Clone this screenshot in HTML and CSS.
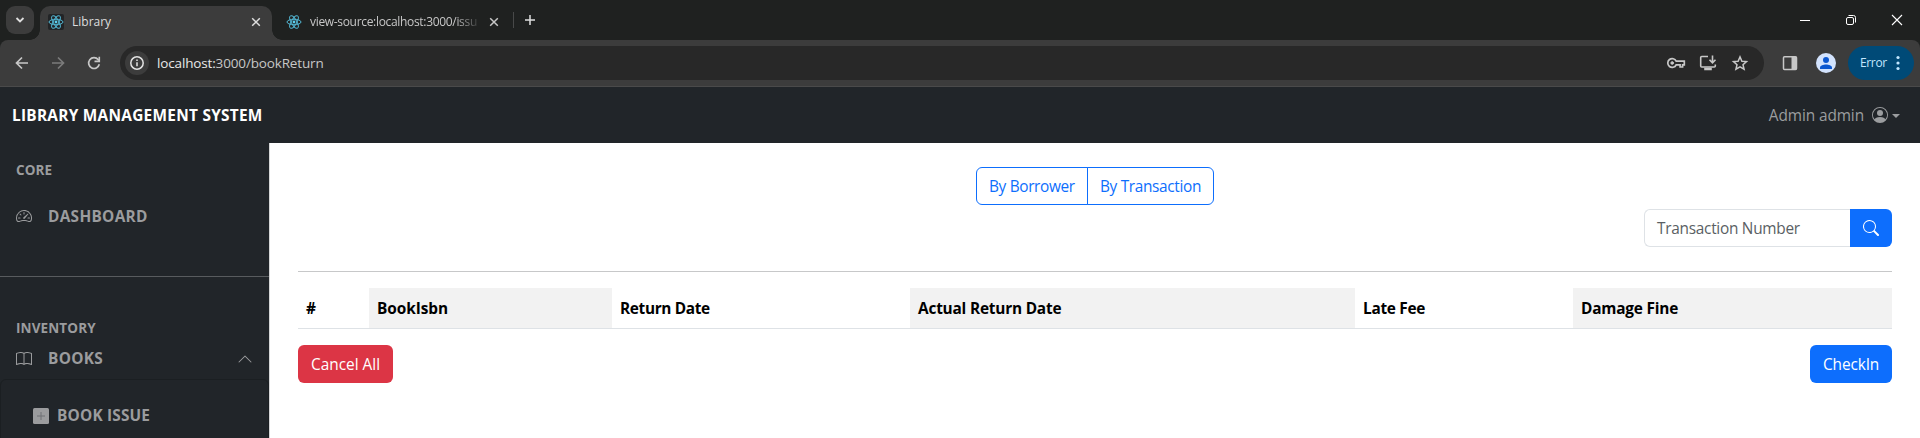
FILE: index.html
```html
<!DOCTYPE html>
<html lang="en">
<head>
<meta charset="utf-8">
<title>Library</title>
<link rel="stylesheet" href="styles.css">
</head>
<body>
<svg class="defs" aria-hidden="true">
  <symbol id="react" viewBox="-12 -12 24 24">
    <g fill="none" stroke="#52b5d1" stroke-width="1.5">
      <ellipse rx="10.5" ry="4.1"/><ellipse rx="10.5" ry="4.1" transform="rotate(60)"/><ellipse rx="10.5" ry="4.1" transform="rotate(120)"/>
    </g>
    <circle r="2.1" fill="#5ccfee"/>
  </symbol>
  <symbol id="x" viewBox="0 0 16 16"><path d="M4.2 4.2l7.6 7.6M11.8 4.2l-7.6 7.6" stroke="currentColor" stroke-width="1.5"/></symbol>
</svg>

<header class="browser">
  <div class="tabstrip">
    <div class="tab-search"><svg width="12" height="12" viewBox="0 0 12 12"><path d="M2.5 4l3.5 3.5L9.500 4" fill="none" stroke="currentColor" stroke-width="1.8"/></svg></div>
    <div class="tab tab-active">
      <span class="favicon favicon-dark"><svg width="16" height="16"><use href="#react"/></svg></span>
      <span class="tab-title t-library">Library</span>
      <svg class="tab-close" width="16" height="16"><use href="#x"/></svg>
    </div>
    <div class="tab tab-idle">
      <span class="favicon"><svg width="16" height="16"><use href="#react"/></svg></span>
      <span class="tab-title tab-fade t-source">view-source:localhost:3000/issu</span>
      <svg class="tab-close" width="16" height="16"><use href="#x"/></svg>
    </div>
    <div class="tab-sep"></div>
    <svg class="tab-new" width="16" height="16" viewBox="0 0 16 16"><path d="M8 3v10M3 8h10" stroke="currentColor" stroke-width="1.5"/></svg>
    <div class="window-controls">
      <svg width="12" height="12" viewBox="0 0 12 12"><path d="M1 6.500h10" stroke="#fff"/></svg>
      <svg width="12" height="12" viewBox="0 0 12 12" fill="none" stroke="#fff"><rect x="1.500" y="3.500" width="7" height="7" rx="1.500"/><path d="M3.500 1.500h5a2 2 0 0 1 2 2v5"/></svg>
      <svg width="12" height="12" viewBox="0 0 12 12"><path d="M1 1l10 10M11 1L1 11" stroke="#fff" stroke-width="1.100"/></svg>
    </div>
  </div>
  <div class="toolbar">
    <div class="nav-icons">
      <svg width="20" height="20" viewBox="0 0 20 20"><path d="M16 10H5M10 4.500L4.500 10l5.500 5.500" fill="none" stroke="#c7c7c7" stroke-width="1.700"/></svg>
      <svg width="20" height="20" viewBox="0 0 20 20"><path d="M4 10h11M10 4.500l5.500 5.500-5.500 5.500" fill="none" stroke="#7b7b7b" stroke-width="1.700"/></svg>
      <svg width="20" height="20" viewBox="0 0 20 20"><path d="M15.300 11.300A5.400 5.400 0 1 1 14.200 6.600L15 7.500" fill="none" stroke="#c7c7c7" stroke-width="1.700"/><path d="M15.300 3.800v4.600h-4.800" fill="none" stroke="#c7c7c7" stroke-width="1.600"/></svg>
    </div>
    <div class="omnibox">
      <span class="site-info"><svg width="16" height="16" viewBox="0 0 16 16"><circle cx="8" cy="8" r="6.200" fill="none" stroke="#e3e3e3" stroke-width="1.500"/><path d="M8 7.200v4M8 4.600v1.500" stroke="#e3e3e3" stroke-width="1.500"/></svg></span>
      <span class="url"><span class="url-host">localhost:</span>3000/bookReturn</span>
      <div class="omni-actions">
        <svg width="20" height="20" viewBox="0 0 20 20" fill="none" stroke="#c7c7c7" stroke-width="1.700"><path d="M10.200 8.200H18.300V11.800H16.600V14H14.100V11.800H10.200A4.400 4.400 0 1 1 10.200 8.200z"/><circle cx="6.200" cy="10" r="1.300" fill="#c7c7c7" stroke-width="1"/></svg>
        <svg width="20" height="20" viewBox="0 0 20 20" fill="none" stroke="#c7c7c7" stroke-width="1.600"><path d="M10 3.500H3.700a1 1 0 0 0-1 1V13a1 1 0 0 0 1 1h12.600a1 1 0 0 0 1-1v-1.500"/><path d="M7 15.500h6v1H7zM14.500 2.500v7M11.500 6.800l3 3 3-3"/></svg>
        <svg width="20" height="20" viewBox="0 0 20 20"><path d="M10 3.900l1.900 4.300 4.600.4-3.500 3.100 1.050 4.500L10 13.800l-4.050 2.400L7 11.700 3.500 8.600l4.600-.4z" fill="none" stroke="#c7c7c7" stroke-width="1.500"/></svg>
      </div>
    </div>
    <svg class="side-panel" width="16" height="16" viewBox="0 0 16 16"><rect x="1.500" y="1.800" width="13" height="12.600" rx="1" fill="none" stroke="#c7c7c7" stroke-width="1.500"/><path d="M9.500 1.800h5v12.600h-5z" fill="#c7c7c7"/></svg>
    <svg class="avatar" width="20" height="20" viewBox="0 0 20 20"><circle cx="10" cy="10" r="10" fill="#d3e3fd"/><circle cx="10" cy="7" r="3" fill="#0b57d0"/><path d="M4 16v-1.500c0-2 3.500-3 6-3s6 1 6 3V16z" fill="#0b57d0"/></svg>
    <div class="error-pill"><span class="t-error">Error</span><svg width="4" height="16" viewBox="0 0 4 16" fill="#c2e7ff"><circle cx="2" cy="2.500" r="1.600"/><circle cx="2" cy="8" r="1.600"/><circle cx="2" cy="13.500" r="1.600"/></svg></div>
  </div>
</header>

<nav class="topbar">
  <span class="brand t-brand">LIBRARY MANAGEMENT SYSTEM</span>
  <div class="user"><span class="t-user">Admin admin</span>
    <svg width="16" height="16" viewBox="0 0 16 16" fill="currentColor"><path d="M11 6a3 3 0 1 1-6 0 3 3 0 0 1 6 0"/><path fill-rule="evenodd" d="M0 8a8 8 0 1 1 16 0A8 8 0 0 1 0 8m8-7a7 7 0 0 0-5.468 11.370C3.242 11.226 4.805 10 8 10s4.757 1.225 5.468 2.370A7 7 0 0 0 8 1"/></svg>
    <span class="caret"></span>
  </div>
</nav>

<div class="layout">
  <aside class="sidebar">
    <div class="heading core"><span class="t-core">CORE</span></div>
    <a class="item dashboard">
      <svg width="16" height="16" viewBox="0 0 16 16" fill="currentColor"><path d="M8 4a.5.5 0 0 1 .5.5V6a.5.5 0 0 1-1 0V4.500A.5.5 0 0 1 8 4M3.732 5.732a.5.5 0 0 1 .707 0l.915.914a.5.5 0 1 1-.708.708l-.914-.915a.5.5 0 0 1 0-.707M2 10a.5.5 0 0 1 .5-.5h1.586a.5.5 0 0 1 0 1H2.500A.5.5 0 0 1 2 10m9.500 0a.5.5 0 0 1 .5-.5h1.500a.5.5 0 0 1 0 1H12a.5.5 0 0 1-.5-.5m.754-4.246a.39.39 0 0 0-.527-.02L7.547 9.310a.91.91 0 1 0 1.302 1.258l3.434-4.297a.39.39 0 0 0-.029-.518z"/><path fill-rule="evenodd" d="M0 10a8 8 0 1 1 15.547 2.661c-.442 1.253-1.845 1.602-2.932 1.250C11.309 13.488 9.475 13 8 13c-1.474 0-3.310.488-4.615.911-1.087.352-2.490.003-2.932-1.250A8 8 0 0 1 0 10m8-7a7 7 0 0 0-6.603 9.329c.203.575.923.876 1.680.63C4.397 12.533 6.358 12 8 12s3.604.532 4.923.960c.757.245 1.477-.056 1.680-.631A7 7 0 0 0 8 3"/></svg>
      <span class="t-dashboard">DASHBOARD</span>
    </a>
    <hr class="side-rule">
    <div class="heading inventory"><span class="t-inventory">INVENTORY</span></div>
    <a class="item books">
      <svg width="16" height="16" viewBox="0 0 16 16" fill="currentColor"><path d="M1 2.828c.885-.37 2.154-.769 3.388-.893 1.330-.134 2.458.063 3.112.752v9.746c-.935-.53-2.120-.603-3.213-.493-1.180.120-2.370.461-3.287.811zm7.500-.141c.654-.689 1.782-.886 3.112-.752 1.234.124 2.503.523 3.388.893v9.923c-.918-.35-2.107-.692-3.287-.810-1.094-.111-2.278-.039-3.213.492zM8 1.783C7.015.936 5.587.810 4.287.940c-1.514.153-3.042.672-3.994 1.105A.5.5 0 0 0 0 2.500v11a.5.5 0 0 0 .707.455c.882-.4 2.303-.881 3.680-1.020 1.409-.142 2.590.087 3.223.877a.5.5 0 0 0 .780 0c.633-.790 1.814-1.019 3.222-.877 1.378.139 2.800.620 3.681 1.020A.5.5 0 0 0 16 13.500v-11a.5.5 0 0 0-.293-.455c-.952-.433-2.480-.952-3.994-1.105C10.413.809 8.985.936 8 1.783"/></svg>
      <span class="t-books">BOOKS</span>
      <svg class="chevron" width="16" height="16" viewBox="0 0 16 16" fill="currentColor"><path fill-rule="evenodd" d="M7.646 4.646a.5.5 0 0 1 .708 0l6 6a.5.5 0 0 1-.708.708L8 5.707l-5.646 5.647a.5.5 0 0 1-.708-.708z"/></svg>
    </a>
    <div class="submenu">
      <a class="subitem">
        <svg width="16" height="16" viewBox="0 0 16 16"><rect width="16" height="16" rx="1.500" fill="#9b9c9e"/><path d="M8 4v8M4 8h8" stroke="#6f7174"/></svg>
        <span class="t-issue">BOOK ISSUE</span>
      </a>
    </div>
  </aside>

  <main class="content">
    <div class="btn-group">
      <button class="btn outline first"><span class="t-borrower">By Borrower</span></button>
      <button class="btn outline last"><span class="t-transaction">By Transaction</span></button>
    </div>
    <div class="search">
      <div class="field"><span class="t-number">Transaction Number</span></div>
      <button class="btn primary search-btn"><svg width="16" height="16" viewBox="0 0 16 16" fill="currentColor"><path d="M11.742 10.344a6.500 6.500 0 1 0-1.397 1.398h-.001q.044.060.098.115l3.850 3.850a1 1 0 0 0 1.415-1.414l-3.850-3.850a1 1 0 0 0-.115-.1zM12 6.500a5.500 5.500 0 1 1-11 0 5.500 5.500 0 0 1 11 0"/></svg></button>
    </div>
    <hr class="main-rule">
    <div class="table-head">
      <div class="th"><span class="t-hash">#</span></div>
      <div class="th striped"><span class="t-isbn">BookIsbn</span></div>
      <div class="th"><span class="t-return">Return Date</span></div>
      <div class="th striped"><span class="t-actual">Actual Return Date</span></div>
      <div class="th"><span class="t-late">Late Fee</span></div>
      <div class="th striped"><span class="t-damage">Damage Fine</span></div>
    </div>
    <div class="actions">
      <button class="btn danger"><span class="t-cancel">Cancel All</span></button>
      <button class="btn primary checkin"><span class="t-checkin">CheckIn</span></button>
    </div>
  </main>
</div>
</body>
</html>
```
FILE: styles.css
```css
* { box-sizing: border-box; }
body {
  margin: 0;
  height: 438px;
  overflow: hidden;
  font: 15.4px/24px "Open Sans", "Noto Sans", sans-serif;
  color: #000;
  background: #fff;
}
svg { display: block; flex: none; }
span { white-space: nowrap; }
.defs { display: none; }

/* Browser frame */
.browser { background: #1f2120; }
.tabstrip { display: flex; height: 40px; padding-left: 6px; color: #dedede; }
.tab-search {
  display: grid; place-items: center;
  width: 28px; height: 28px; margin: 6px 6px 0 0;
  border-radius: 9px; background: #3c3c3c;
}
.tab { display: flex; align-items: center; height: 34px; margin-top: 6px; padding-bottom: 2px; font-size: 12px; }
.tab-active { position: relative; width: 232px; padding-left: 8px; border-radius: 10px 10px 0 0; background: #3c3c3c; }
.tab-active::before, .tab-active::after { content: ""; position: absolute; bottom: 0; width: 10px; height: 10px; }
.tab-active::before { left: -10px; background: radial-gradient(circle at 0 0, transparent 9.5px, #3c3c3c 10px); }
.tab-active::after { right: -10px; background: radial-gradient(circle at 100% 0, transparent 9.5px, #3c3c3c 10px); }
.tab-idle { width: 240px; padding-left: 14px; color: #c7c7c7; }
.favicon { width: 16px; height: 16px; margin-right: 8px; border-radius: 2px; }
.favicon-dark { background: #222426; }
.tab-title { flex: 1; }
.tab-fade { flex: none; width: 168px; margin-right: 8px; -webkit-mask-image: linear-gradient(90deg, #000 145px, transparent 172px); }
.tab-close { margin-right: 8px; }
.tab-idle .tab-close { margin: 0; }
.tab-sep { width: 1px; height: 16px; margin: 12px 0 0 1px; background: #484949; }
.tab-new { margin: 12px 0 0 8px; }
.window-controls { display: flex; gap: 34px; margin: 14px 17px 0 auto; }

.toolbar {
  display: flex; align-items: center;
  height: 47px; padding: 0 6px 1px 12px;
  border-bottom: 1px solid #4a4a4a; border-radius: 8px 8px 0 0;
  background: #3c3c3c;
}
.nav-icons { display: flex; gap: 16px; }
.omnibox {
  display: flex; align-items: center;
  width: 1644px; height: 34px; margin-left: 16px; padding: 0 14px 0 5px;
  border-radius: 17px; background: #282828;
}
.site-info { display: grid; place-items: center; width: 24px; height: 24px; border-radius: 50%; background: #3c3c3c; }
.url { margin-left: 8px; font-size: 13.5px; letter-spacing: -.15px; color: #c7c7c7; }
.url-host { color: #e8e8e8; }
.omni-actions { display: flex; gap: 12px; margin-left: auto; }
.side-panel { margin-left: 18px; }
.avatar { margin-left: 18px; }
.error-pill {
  display: flex; align-items: center;
  width: 66px; height: 34px; margin-left: 12px; padding: 0 14px 0 12px;
  justify-content: space-between;
  border-radius: 17px; background: #004a77; color: #c2e7ff; font-size: 12px;
}

/* Application bar */
.topbar {
  display: flex; align-items: center; justify-content: space-between;
  height: 56px; padding: 1px 20px 0 12px; background: #212529;
}
.brand { color: #fff; font-weight: 700; }
.user { display: flex; align-items: center; color: #9b9d9f; }
.user svg { margin: -1px 0 0 8px; }
.caret { margin-left: 4px; border: 4.8px solid transparent; border-top-color: currentColor; border-bottom: 0; }

.layout { display: flex; height: 295px; }

/* Sidebar */
.sidebar { width: 270px; border-right: 1px solid #d5d6d7; background: #212529; color: #9b9c9e; font-weight: 700; overflow: hidden; }
.heading { padding-left: 16px; font-size: 13.5px; line-height: 20px; }
.core { margin-top: 17px; }
.item { display: flex; align-items: center; height: 24px; padding: 0 16px; gap: 16px; }
.dashboard { margin-top: 24px; }
.dashboard span { padding-top: 1px; }
.side-rule { margin: 48px 0 0; border: 0; border-top: 1px solid #585b5e; }
.inventory { margin-top: 41px; }
.books { margin-top: 9px; }
.chevron { margin-left: auto; }
.submenu { height: 120px; margin-top: 8px; padding: 24px 0 0 32px; border: 1px solid #1b1f22; border-radius: 6px; }
.subitem { display: flex; align-items: center; gap: 8px; }

/* Main area */
.content { flex: 1; display: flex; flex-direction: column; padding: 24px 28px 0; }
.btn {
  height: 38px; padding: 1px 0 0 12px; border: 1px solid transparent; border-radius: 6px;
  font: inherit; color: #fff; background: none; display: grid; align-items: center; justify-items: start;
}
.btn-group { display: flex; align-self: center; }
.outline { border-color: #0d6efd; color: #0d6efd; }
.first { width: 112px; border-radius: 6px 0 0 6px; }
.last { width: 127px; margin-left: -1px; border-radius: 0 6px 6px 0; }
.search { display: flex; align-self: flex-end; margin-top: 4px; }
.field { width: 206px; height: 38px; padding: 7px 12px 5px; border: 1px solid #dee2e6; border-right: 0; border-radius: 6px 0 0 6px; color: #5a5f64; }
.primary { background: #0d6efd; }
.search-btn { width: 42px; padding-top: 0; border-radius: 0 6px 6px 0; }
.main-rule { width: 100%; margin: 24px 0 16px; border: 0; border-top: 1px solid #c7c8c9; }
.table-head {
  display: grid; grid-template-columns: 71px 243px 298px 445px 218px 319px;
  height: 41px; border-bottom: 1px solid #dee2e6; font-weight: 700;
}
.th { padding: 9px 8px 7px; }
.striped { background: #f2f2f2; }
.actions { display: flex; justify-content: space-between; margin-top: 16px; }
.danger { width: 95px; background: #dc3545; }
.checkin { width: 82px; }

/* Per-label tracking */
.t-source { letter-spacing: -.32px; }
.t-error { letter-spacing: -.35px; }
.t-brand { letter-spacing: .27px; }
.t-user { letter-spacing: -.1px; }
.t-dashboard, .t-books { letter-spacing: .3px; }
.t-issue { letter-spacing: .18px; }
.t-inventory, .t-core { letter-spacing: .12px; }
.t-borrower, .t-transaction, .t-return { letter-spacing: -.34px; }
.t-number { letter-spacing: -.27px; }
.t-actual, .t-damage { letter-spacing: -.2px; }
.t-late { letter-spacing: -.3px; }
.t-isbn { letter-spacing: -.06px; }
.t-checkin { letter-spacing: -.12px; }
```
